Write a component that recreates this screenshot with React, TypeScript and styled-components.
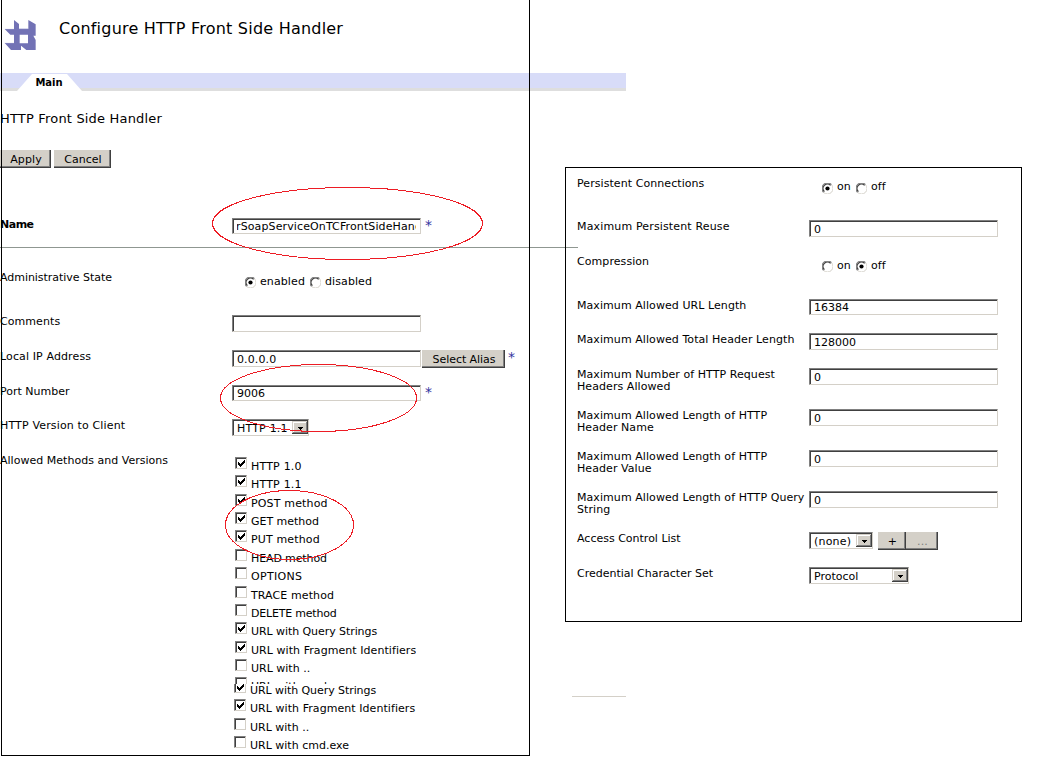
import React from "react";
import styled, { createGlobalStyle } from "styled-components";

const GlobalStyle = createGlobalStyle`
  body {
    margin: 0;
    background: #fff;
    color: #000;
    font: 11px/12px Verdana, "DejaVu Sans", sans-serif;
    overflow: hidden;
  }
  * { box-sizing: border-box; }
`;

const Page = styled.div`
  position: relative;
  width: 1044px;
  height: 782px;
  overflow: hidden;
`;

const Header = styled.header`
  display: flex;
  height: 73px;
  padding: 19px 0 0 4px;
  gap: 22px;
`;

const Title = styled.h1`
  margin: 0;
  font-size: 16px;
  line-height: 20px;
  font-weight: 400;
  white-space: nowrap;
  letter-spacing: 0.22px;
`;

const TabBar = styled.nav`
  width: 626px;
  height: 18px;
  padding: 1px 0 0 17px;
  background: linear-gradient(#d8dcf8 15px, #dedede 15px);
`;

const Tab = styled.div`
  width: 65px;
  height: 17px;
  padding: 3px 1px 0 0;
  text-align: center;
  font-weight: 700;
  font-size: 10px;
  background: #fff;
  clip-path: polygon(15px 0, 50px 0, 65px 17px, 0 17px);
`;

const Columns = styled.div`
  display: flex;
`;

const Left = styled.main`
  width: 565px;
  flex: none;
`;

const Right = styled.aside`
  width: 457px;
  padding-top: 76px;
`;

const SubHeading = styled.h2`
  margin: 0;
  padding-top: 20px;
  height: 59px;
  font-size: 13px;
  line-height: 16px;
  font-weight: 400;
  letter-spacing: 0.18px;
`;

const Toolbar = styled.div`
  display: flex;
  gap: 3px;
  height: 68px;
`;

const Button = styled.button<{ $w: number; $ls?: number }>`
  width: ${(p) => p.$w}px;
  height: 18px;
  padding: 2px 0 0 1px;
  border: 0;
  flex: none;
  background: #d4d0c8;
  box-shadow: inset -1px -1px #404040, inset -2px -2px #808080;
  font: inherit;
  color: #000;
  letter-spacing: ${(p) => p.$ls ?? 0.1}px;
  white-space: nowrap;
  &:disabled { color: #808080; }
`;

const Row = styled.div<{ $h: number }>`
  display: flex;
  align-items: flex-start;
  height: ${(p) => p.$h}px;
`;

const Label = styled.div<{ $bold?: boolean; $ls?: number }>`
  width: 232px;
  padding-top: 1px;
  flex: none;
  white-space: pre-line;
  font-weight: ${(p) => (p.$bold ? 700 : 400)};
  letter-spacing: ${(p) => p.$ls ?? 0.07}px;
`;

const Field = styled.input<{ $h?: number; $indent?: number; $ls?: number }>`
  width: 189px;
  height: ${(p) => p.$h ?? 17}px;
  padding: 1px 4px 0;
  margin: 0;
  border: 1px solid;
  border-color: #808080 #d4d0c8 #d4d0c8 #808080;
  border-radius: 0;
  box-shadow: inset 1px 1px #404040;
  flex: none;
  outline: 0;
  background: #fff;
  color: #000;
  font: inherit;
  text-indent: ${(p) => p.$indent ?? 0}px;
  letter-spacing: ${(p) => p.$ls ?? 0}px;
`;

const Required = styled.span`
  padding: 1px 0 0 4px;
  font-size: 14px;
  color: #3333a0;
`;

const Alias = styled.div`
  display: flex;
  padding-left: 1px;
  margin-right: -1px;
`;

const Rule = styled.hr`
  width: 578px;
  height: 1px;
  margin: 0 0 23px;
  border: 0;
  background: #8f9791;
`;

const SelectBox = styled.div<{ $w: number; $ls?: number }>`
  display: flex;
  justify-content: space-between;
  width: ${(p) => p.$w}px;
  height: 17px;
  padding: 1px 0 1px 4px;
  border: 1px solid;
  border-color: #808080 #d4d0c8 #d4d0c8 #808080;
  box-shadow: inset 1px 1px #404040;
  line-height: 15px;
  white-space: nowrap;
  letter-spacing: ${(p) => p.$ls ?? 0}px;
`;

const Arrow = styled.span`
  display: flex;
  align-items: center;
  justify-content: center;
  width: 16px;
  height: 13px;
  padding-top: 2px;
  background: #d4d0c8;
  box-shadow: inset -1px -1px #404040, inset 1px 1px #d4d0c8, inset -2px -2px #808080, inset 2px 2px #fff;
`;

const ButtonPair = styled.div`
  display: flex;
  margin-left: 5px;
`;

const Radios = styled.div<{ $top: number }>`
  display: flex;
  gap: 5px;
  padding: ${(p) => p.$top}px 0 0 13px;
`;

const Choice = styled.span`
  display: flex;
  gap: 4px;
  letter-spacing: 0.1px;
`;

const RadioMark = styled.svg<{ $drop: number }>`
  margin-top: ${(p) => p.$drop}px;
  flex: none;
`;

const CheckList = styled.div<{ $h: number; $pad?: number; $up?: number; $left: number }>`
  height: ${(p) => p.$h}px;
  overflow: hidden;
  padding: ${(p) => p.$pad ?? 0}px 0 0 ${(p) => p.$left}px;
  > :first-child { margin-top: -${(p) => p.$up ?? 0}px; }
`;

const CheckRow = styled.div<{ $h: number; $ls: number }>`
  display: flex;
  gap: 4px;
  height: ${(p) => p.$h}px;
  white-space: nowrap;
  letter-spacing: ${(p) => p.$ls}px;
  span { padding-top: 4px; }
`;

const Box = styled.i`
  width: 12px;
  height: 12px;
  flex: none;
  border: 1px solid;
  border-color: #808080 #d4d0c8 #d4d0c8 #808080;
  box-shadow: inset 1px 1px #404040;
  svg { display: block; }
`;

const Panel = styled.section`
  height: 455px;
  border: 1px solid #000;
  padding: 9px 0 0 11px;
`;

const Stub = styled.div`
  width: 54px;
  height: 1px;
  margin: 74px 0 0 7px;
  background: #d4d0c8;
`;

const Frame = styled.div`
  position: absolute;
  left: 1px;
  top: -1px;
  width: 529px;
  height: 757px;
  border: 1px solid #000;
  pointer-events: none;
`;

const Marks = styled.svg`
  position: absolute;
  left: 0;
  top: 0;
  pointer-events: none;
`;

const Logo = () => (
  <svg width="33" height="33" viewBox="12 57 99 99">
    <path
      fill="#7272b5"
      fillRule="evenodd"
      d="M42 60 57 72V86H85V60L107 73V107H100L107 120V150H79L63 137V150H33L14 129H42V104H31L14 87H42ZM59 104V130H84V104Z"
    />
    <path d="M14 87H42M57 86H85M14 129H42" stroke="#c9c9e6" strokeWidth="1" />
  </svg>
);

const Radio = ({ on, drop = 1 }: { on?: boolean; drop?: number }) => (
  <RadioMark $drop={drop} width="11" height="11" viewBox="0 0 11 11">
    <path d="M9.4 1.6A5 5 0 0 1 1.6 9.4" fill="none" stroke="#d4d0c8" />
    <path d="M1.6 9.4A5 5 0 0 1 9.4 1.6" fill="none" stroke="#808080" strokeWidth="1.2" />
    <path d="M2.4 8.6A4.3 4.3 0 0 1 8.6 2.4" fill="none" stroke="#404040" strokeWidth="1.2" />
    {on && <circle cx="5.5" cy="5.5" r="2.1" />}
  </RadioMark>
);

const RadioPair = ({ a, b, first, top, drop }: { a: string; b: string; first: boolean; top: number; drop?: number }) => (
  <Radios $top={top}>
    <Choice><Radio on={first} drop={drop} />{a}</Choice>
    <Choice><Radio on={!first} drop={drop} />{b}</Choice>
  </Radios>
);

const Select = ({ value, w, ls }: { value: string; w: number; ls?: number }) => (
  <SelectBox $w={w} $ls={ls}>
    {value}
    <Arrow>
      <svg width="5" height="3" shapeRendering="crispEdges"><path d="M0 0h5v1h-5zM1 1h3v1h-3zM2 2h1v1h-1z" /></svg>
    </Arrow>
  </SelectBox>
);

type Item = [text: string, on: boolean, height: number, spacing: number];

const Check = ({ item: [text, on, h, ls] }: { item: Item }) => (
  <CheckRow $h={h} $ls={ls}>
    <Box>
      {on && (
        <svg width="10" height="10" shapeRendering="crispEdges">
          <path d="M2 4v3h1v1h1v1h1v-1h1v-1h1v-1h1v-1h1v-3h-1v1h-1v1h-1v1h-1v1h-1v-1h-1v-1z" />
        </svg>
      )}
    </Box>
    <span>{text}</span>
  </CheckRow>
);

const methods: Item[] = [
  ["HTTP 1.0", true, 18, 0.2],
  ["HTTP 1.1", true, 19, 0.2],
  ["POST method", true, 18, 0.16],
  ["GET method", true, 18, -0.03],
  ["PUT method", true, 19, 0.14],
  ["HEAD method", false, 18, -0.12],
  ["OPTIONS", false, 19, 0.3],
  ["TRACE method", false, 18, 0.1],
  ["DELETE method", false, 18, -0.2],
  ["URL with Query Strings", true, 19, -0.07],
  ["URL with Fragment Identifiers", true, 18, 0.06],
  ["URL with ..", false, 18, 0],
  ["URL with cmd.exe", false, 18, 0],
];

const urlOptions: Item[] = [
  ["URL with Query Strings", true, 18, -0.07],
  ["URL with Fragment Identifiers", true, 19, 0.06],
  ["URL with ..", false, 18, 0],
  ["URL with cmd.exe", false, 18, 0],
];

const limits: { label: string; value: string; h: number; field?: number }[] = [
  { label: "Maximum Allowed URL Length", value: "16384", h: 34, field: 16 },
  { label: "Maximum Allowed Total Header Length", value: "128000", h: 35 },
  { label: "Maximum Number of HTTP Request\nHeaders Allowed", value: "0", h: 41 },
  { label: "Maximum Allowed Length of HTTP\nHeader Name", value: "0", h: 41 },
  { label: "Maximum Allowed Length of HTTP\nHeader Value", value: "0", h: 41 },
  { label: "Maximum Allowed Length of HTTP Query\nString", value: "0", h: 41 },
];

export default function App() {
  return (
    <Page>
      <GlobalStyle />
      <Header>
        <Logo />
        <Title>Configure HTTP Front Side Handler</Title>
      </Header>
      <TabBar><Tab>Main</Tab></TabBar>
      <Columns>
        <Left>
          <SubHeading>HTTP Front Side Handler</SubHeading>
          <Toolbar>
            <Button $w={51}>Apply</Button>
            <Button $w={57} $ls={0}>Cancel</Button>
          </Toolbar>
          <Row $h={29}>
            <Label $bold $ls={-0.5}>Name</Label>
            <Field $h={16} $indent={-1} $ls={0.12} defaultValue="rSoapServiceOnTCFrontSideHandler" />
            <Required>*</Required>
          </Row>
          <Rule />
          <Row $h={44}>
            <Label $ls={-0.04}>Administrative State</Label>
            <RadioPair a="enabled" b="disabled" first top={5} />
          </Row>
          <Row $h={35}>
            <Label>Comments</Label>
            <Field defaultValue="" />
          </Row>
          <Row $h={35}>
            <Label $ls={0.12}>Local IP Address</Label>
            <Field defaultValue="0.0.0.0" $ls={0.12} />
            <Alias><Button $w={83} $ls={-0.05}>Select Alias</Button></Alias>
            <Required>*</Required>
          </Row>
          <Row $h={34}>
            <Label $ls={0}>Port Number</Label>
            <Field $h={16} defaultValue="9006" />
            <Required>*</Required>
          </Row>
          <Row $h={35}>
            <Label $ls={0.15}>HTTP Version to Client</Label>
            <Select value="HTTP 1.1" w={77} ls={0.2} />
          </Row>
          <Row $h={301}>
            <Label $ls={0.02}>Allowed Methods and Versions</Label>
            <div>
              <CheckList $h={230} $pad={3} $left={3}>
                {methods.map((m) => <Check key={m[0]} item={m} />)}
              </CheckList>
              <CheckList $h={70} $up={3} $left={2}>
                {urlOptions.map((m) => <Check key={m[0]} item={m} />)}
              </CheckList>
            </div>
          </Row>
        </Left>
        <Right>
          <Panel>
            <Row $h={43}>
              <Label>Persistent Connections</Label>
              <RadioPair a="on" b="off" first top={4} drop={2} />
            </Row>
            <Row $h={35}>
              <Label $ls={0.15}>Maximum Persistent Reuse</Label>
              <Field defaultValue="0" />
            </Row>
            <Row $h={44}>
              <Label>Compression</Label>
              <RadioPair a="on" b="off" first={false} top={5} drop={1} />
            </Row>
            {limits.map((l) => (
              <Row key={l.label} $h={l.h}>
                <Label>{l.label}</Label>
                <Field $h={l.field} defaultValue={l.value} />
              </Row>
            ))}
            <Row $h={35}>
              <Label $ls={0}>Access Control List</Label>
              <Select value="(none)" w={64} ls={0.2} />
              <ButtonPair>
                <Button $w={28}>+</Button>
                <Button $w={32} disabled>...</Button>
              </ButtonPair>
            </Row>
            <Row $h={17}>
              <Label $ls={0}>Credential Character Set</Label>
              <Select value="Protocol" w={100} />
            </Row>
          </Panel>
          <Stub />
        </Right>
      </Columns>
      <Frame />
      <Marks width="1044" height="782" fill="none" stroke="#ed1c24" shapeRendering="crispEdges">
        <ellipse cx="347.5" cy="223.5" rx="135" ry="36" />
        <ellipse cx="318.5" cy="398" rx="98" ry="33.5" />
        <ellipse cx="289.5" cy="525" rx="64" ry="34.5" />
      </Marks>
    </Page>
  );
}
